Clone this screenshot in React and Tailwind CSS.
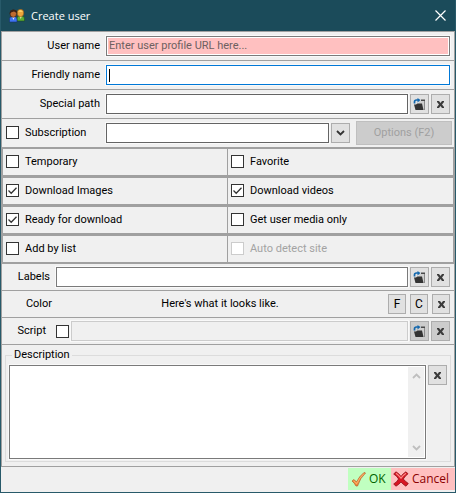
import React from "react";

const button = "flex h-5 shrink-0 items-center justify-center border border-[#adadad] text-[#3c3c3c]";
const box = "h-5 min-w-0 flex-1 rounded-none border px-[2px] outline outline-1 outline-[#f9f9f9]";
const row = "flex items-center border-b border-[#a0a0a0] pr-1";

function CrossIcon() {
  return (
    <svg width="9" height="9" viewBox="0 0 9 9" aria-hidden="true">
      <path d="M1 1h2l1.500 2L6 1h2v1L6 4.500 8 7v1H6L4.500 6 3 8H1V7l2-2.500L1 2z" fill="#3c3c3c" />
    </svg>
  );
}

function FolderIcon() {
  return (
    <svg width="13" height="13" viewBox="0 0 13 13" aria-hidden="true">
      <path d="M6 3h6v9H3V6l3-1z" fill="#cfcfcf" />
      <path d="M11.500 2.500V12" fill="none" stroke="#8a8a8a" />
      <path d="M8 1.500h4V3H8z" fill="#4a4a4a" />
      <path d="M1 6.500h2L4.500 5.500h4.500L10.500 12H2.500z" fill="#333" />
      <path d="M1.500 5.500V4q0-2 2-2H5" fill="none" stroke="#1267ad" strokeWidth="1.700" />
      <path d="M4.500 0l3 2-3 2.600z" fill="#1267ad" />
    </svg>
  );
}

function Chevron({ up = false, color }) {
  return (
    <svg width="9" height="6" viewBox="0 0 9 6" aria-hidden="true">
      <path d={up ? "M1 5l3.500-3.500L8 5" : "M1 1l3.500 3.500L8 1"} fill="none" stroke={color} strokeWidth="1.800" />
    </svg>
  );
}

function UsersIcon() {
  return (
    <svg width="16" height="14" viewBox="0 0 16 14" aria-hidden="true">
      <path d="M8 12V9.500Q8 7 10 7h3q2.500 0 2.500 3v2z" fill="#5fae32" stroke="#1d4c23" strokeWidth=".6" />
      <path d="M10.500 7l1.200 3L13 7z" fill="#e8efb0" />
      <ellipse cx="11.500" cy="4" rx="3.300" ry="3.700" fill="#eda63c" stroke="#8a5312" strokeWidth=".6" />
      <path d="M9 2.500Q11 0 14 2.500L12 3z" fill="#ffd36a" />
      <path d="M.5 13V10Q.5 7.500 3 7.500h2.500q2.500 0 2.500 3V13z" fill="#3f74f0" stroke="#16306f" strokeWidth=".6" />
      <path d="M3 7.500L4.400 11 6 7.500z" fill="#dfe6ff" />
      <ellipse cx="4.300" cy="4.600" rx="3.300" ry="3.700" fill="#c06a30" stroke="#3d1a09" strokeWidth=".6" />
      <path d="M.8 5Q.5.800 4.500.800T8 4L5 2.600 2.500 3.300z" fill="#3b2015" />
    </svg>
  );
}

function IconButton({ label, disabled, wide = true, children }) {
  return (
    <button
      type="button"
      aria-label={label}
      disabled={disabled}
      className={`${button} ${wide ? "w-[19px]" : "w-[18px]"} ${disabled ? "bg-[#cccccc]" : "bg-[#e1e1e1]"}`}
    >
      {children}
    </button>
  );
}

function Tick({ id, checked, disabled }) {
  return (
    <span className="grid size-[13px] shrink-0">
      <input
        id={id}
        type="checkbox"
        defaultChecked={checked}
        disabled={disabled}
        className="peer col-start-1 row-start-1 size-[13px] appearance-none border border-[#333333] bg-white disabled:border-[#cccccc]"
      />
      <svg
        viewBox="0 0 13 13"
        aria-hidden="true"
        className="pointer-events-none invisible col-start-1 row-start-1 size-[13px] peer-checked:visible"
      >
        <path d="M2.500 6.500l2.700 2.700 5.300-5.500" fill="none" stroke="#333" strokeWidth="1.300" />
      </svg>
    </span>
  );
}

const options = [
  { id: "temporary", label: "Temporary" },
  { id: "favorite", label: "Favorite" },
  { id: "images", label: "Download Images", checked: true },
  { id: "videos", label: "Download videos", checked: true },
  { id: "ready", label: "Ready for download", checked: true },
  { id: "media", label: "Get user media only" },
  { id: "list", label: "Add by list" },
  { id: "detect", label: "Auto detect site", disabled: true },
];

export default function App() {
  return (
    <form className="border border-t-0 border-[#285a6a] bg-[#f0f0f0] font-['Roboto',sans-serif] text-[11px] leading-4 text-black">
      <header className="flex h-[31px] items-center justify-between bg-[#1b4b5a] pr-[9px] pl-2 font-['Open_Sans',sans-serif] text-white">
        <h1 className="flex items-center gap-[6px]">
          <UsersIcon />
          Create user
        </h1>
        <button type="button" aria-label="Close" className="size-[11px]">
          <svg width="11" height="11" viewBox="0 0 11 11" aria-hidden="true">
            <path d="M.5.500l10 10M10.500.500l-10 10" stroke="#fff" strokeWidth="1.200" />
          </svg>
        </button>
      </header>

      <main className="border border-[#a0a0a0]">
        <div className={`${row} h-[29px]`}>
          <label htmlFor="user" className="w-[104px] shrink-0 pr-[6px] text-right">User name</label>
          <div className="flex h-5 flex-1 border border-[#7a7a7a] bg-white p-px outline outline-1 outline-[#f9f9f9]">
            <input
              id="user"
              placeholder="Enter user profile URL here..."
              className="min-w-0 flex-1 bg-[#ffc0c0] px-px outline-none placeholder:text-[#6d6060]"
            />
          </div>
        </div>
        <div className={`${row} h-[29px]`}>
          <label htmlFor="friendly" className="w-[104px] shrink-0 pr-[6px] text-right">Friendly name</label>
          <div className="flex h-5 flex-1 items-center border border-[#0078d7] bg-white px-[2px] outline outline-1 outline-[#f9f9f9]">
            <span className="h-[13px] w-px bg-black" />
            <input id="friendly" className="min-w-0 flex-1 outline-none" />
          </div>
        </div>
        <div className={`${row} h-[29px] gap-[2px]`}>
          <label htmlFor="path" className="w-[102px] shrink-0 pr-1 text-right">Special path</label>
          <input id="path" className={`${box} border-[#646464] bg-white`} />
          <IconButton label="Choose path"><FolderIcon /></IconButton>
          <IconButton label="Clear path"><CrossIcon /></IconButton>
        </div>
        <div className="flex h-7 items-center pr-[2px]">
          <div className="flex w-[104px] shrink-0 items-center gap-[6px] self-stretch pb-px pl-1">
            <Tick id="subscription" />
            <label htmlFor="subscription">Subscription</label>
          </div>
          <select aria-label="Subscription name" className={`${box} appearance-none border-[#646464] bg-white`} />
          <div className="pr-[6px] pl-[2px]">
            <IconButton label="Show subscriptions"><Chevron color="#333" /></IconButton>
          </div>
          <button type="button" disabled className="h-6 w-24 border border-[#bfbfbf] bg-[#cccccc] text-[#a0a0a0]">
            Options (F2)
          </button>
        </div>

        <div className="grid grid-cols-[224fr_225fr] gap-x-px gap-y-[3px] border-x border-y-2 border-[#a0a0a0] bg-[#a0a0a0]">
          {options.map((o) => (
            <div key={o.id} className="flex h-[26px] items-center gap-[6px] bg-[#f0f0f0] pb-px pl-[3px]">
              <Tick id={o.id} checked={o.checked} disabled={o.disabled} />
              <label htmlFor={o.id} className={o.disabled ? "text-[#a3a3a3]" : ""}>{o.label}</label>
            </div>
          ))}
        </div>

        <div className={`${row} h-[27px] gap-[2px]`}>
          <label htmlFor="labels" className="w-[52px] shrink-0 pr-1 text-right">Labels</label>
          <input id="labels" className={`${box} border-[#7a7a7a] bg-white`} />
          <IconButton label="Choose labels"><FolderIcon /></IconButton>
          <IconButton label="Clear labels"><CrossIcon /></IconButton>
        </div>
        <div className={`${row} h-[27px] gap-1`}>
          <span className="w-[50px] shrink-0 text-right">Color</span>
          <p className="flex-1 text-center">Here's what it looks like.</p>
          <button type="button" className={`${button} w-[18px] bg-[#e1e1e1] text-[12px] text-black`}>F</button>
          <button type="button" className={`${button} w-[18px] bg-[#e1e1e1] text-[12px] text-black`}>C</button>
          <IconButton label="Clear color" wide={false}><CrossIcon /></IconButton>
        </div>
        <div className={`${row} h-[27px] gap-[2px]`}>
          <label htmlFor="script" className="w-[52px] shrink-0 pr-2 text-right">Script</label>
          <Tick id="script" />
          <input aria-label="Script path" disabled className={`${box} border-[#cccccc] bg-[#f0f0f0]`} />
          <IconButton label="Choose script" disabled><FolderIcon /></IconButton>
          <IconButton label="Clear script" disabled><CrossIcon /></IconButton>
        </div>

        <div className="px-[3px] pt-[2px] pb-1">
          <fieldset className="border border-[#dcdcdc] px-[3px] py-[2px]">
            <legend className="ml-[3px] px-[2px]">Description</legend>
            <div className="flex items-start gap-[2px]">
              <div className="flex h-[94px] flex-1 border border-[#7a7a7a] bg-white p-px outline outline-1 outline-[#f9f9f9]">
                <textarea aria-label="Description" className="min-w-0 flex-1 resize-none outline-none" />
                <div className="flex w-4 flex-col items-center justify-between bg-[#f0f0f0] py-[6px]">
                  <Chevron up color="#bfbfbf" />
                  <Chevron color="#bfbfbf" />
                </div>
              </div>
              <IconButton label="Clear description"><CrossIcon /></IconButton>
            </div>
          </fieldset>
        </div>
      </main>

      <footer className="flex h-[25px] justify-end pt-px pb-[2px] font-['Open_Sans',sans-serif] text-[12px]">
        <button type="submit" className="flex w-[43px] items-center gap-[3px] bg-[#c0ffc0] pl-[3px] text-[#006400]">
          <svg width="15" height="15" viewBox="0 0 15 15" aria-hidden="true">
            <path d="M1 9l2-1.500L5.500 10Q8.500 4 13 .5l1.500.5Q9 6 6.500 14H5Q3.500 11 1 9z" fill="#f08c3c" stroke="#b65a24" strokeWidth=".7" />
            <path d="M2.500 8.700l3 3Q8.500 5.500 13 1.500" fill="none" stroke="#ffc07c" strokeWidth=".8" />
          </svg>
          OK
        </button>
        <button type="button" className="flex w-16 items-center gap-[3px] bg-[#ffc0c0] pl-[2px] text-[#8b0000]">
          <svg width="16" height="16" viewBox="0 0 16 16" aria-hidden="true">
            <path d="M.7 3L3 .8Q6 2.500 8 5.500 10 2.500 13 .8l2 2Q12 5 10.300 8q2 2.500 5 4.500L13 15.200Q10 13.500 8 11 6 13.500 3 15.200L.7 13Q4 11 5.600 8 4 5 .7 3z" fill="#d81522" stroke="#8f1119" strokeWidth=".8" />
            <path d="M3 2.200Q6 4.500 8 7.200 10 4.200 13 2.200" fill="none" stroke="#ff8a85" strokeWidth="1.200" />
          </svg>
          Cancel
        </button>
      </footer>
    </form>
  );
}
